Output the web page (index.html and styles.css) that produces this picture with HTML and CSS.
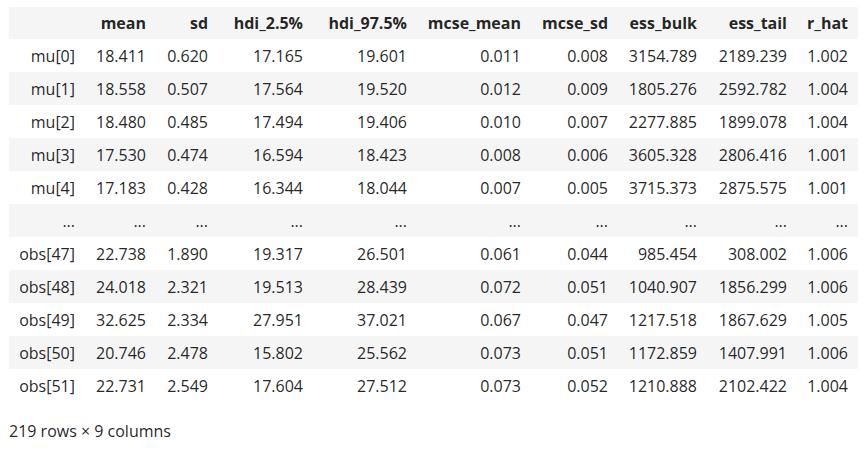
FILE: index.html
```html
<!DOCTYPE html>
<html>
<head>
<meta charset="utf-8">
<link rel="stylesheet" href="styles.css">
</head>
<body>
<div class="output">
<table class="df">
<colgroup>
<col class="c-idx"><col class="c-mean"><col class="c-sd"><col class="c-h1"><col class="c-h2"><col class="c-mm"><col class="c-ms"><col class="c-eb"><col class="c-et"><col class="c-rh">
</colgroup>
<thead>
<tr><th></th><th>mean</th><th>sd</th><th>hdi_2.5%</th><th>hdi_97.5%</th><th>mcse_mean</th><th>mcse_sd</th><th>ess_bulk</th><th>ess_tail</th><th>r_hat</th></tr>
</thead>
<tbody>
<tr><th>mu[0]</th><td>18.411</td><td>0.620</td><td>17.165</td><td>19.601</td><td>0.011</td><td>0.008</td><td>3154.789</td><td>2189.239</td><td>1.002</td></tr>
<tr><th>mu[1]</th><td>18.558</td><td>0.507</td><td>17.564</td><td>19.520</td><td>0.012</td><td>0.009</td><td>1805.276</td><td>2592.782</td><td>1.004</td></tr>
<tr><th>mu[2]</th><td>18.480</td><td>0.485</td><td>17.494</td><td>19.406</td><td>0.010</td><td>0.007</td><td>2277.885</td><td>1899.078</td><td>1.004</td></tr>
<tr><th>mu[3]</th><td>17.530</td><td>0.474</td><td>16.594</td><td>18.423</td><td>0.008</td><td>0.006</td><td>3605.328</td><td>2806.416</td><td>1.001</td></tr>
<tr><th>mu[4]</th><td>17.183</td><td>0.428</td><td>16.344</td><td>18.044</td><td>0.007</td><td>0.005</td><td>3715.373</td><td>2875.575</td><td>1.001</td></tr>
<tr><th>...</th><td>...</td><td>...</td><td>...</td><td>...</td><td>...</td><td>...</td><td>...</td><td>...</td><td>...</td></tr>
<tr><th>obs[47]</th><td>22.738</td><td>1.890</td><td>19.317</td><td>26.501</td><td>0.061</td><td>0.044</td><td>985.454</td><td>308.002</td><td>1.006</td></tr>
<tr><th>obs[48]</th><td>24.018</td><td>2.321</td><td>19.513</td><td>28.439</td><td>0.072</td><td>0.051</td><td>1040.907</td><td>1856.299</td><td>1.006</td></tr>
<tr><th>obs[49]</th><td>32.625</td><td>2.334</td><td>27.951</td><td>37.021</td><td>0.067</td><td>0.047</td><td>1217.518</td><td>1867.629</td><td>1.005</td></tr>
<tr><th>obs[50]</th><td>20.746</td><td>2.478</td><td>15.802</td><td>25.562</td><td>0.073</td><td>0.051</td><td>1172.859</td><td>1407.991</td><td>1.006</td></tr>
<tr><th>obs[51]</th><td>22.731</td><td>2.549</td><td>17.604</td><td>27.512</td><td>0.073</td><td>0.052</td><td>1210.888</td><td>2102.422</td><td>1.004</td></tr>
</tbody>
</table>
<p class="shape">219 rows × 9 columns</p>
</div>
</body>
</html>
```
FILE: styles.css
```css
html, body {
  margin: 0;
  padding: 0;
  background: #ffffff;
}
body {
  font-family: "Open Sans", "Noto Sans", sans-serif;
  font-size: 16px;
  color: rgba(0, 0, 0, 0.87);
}
.output {
  padding: 7px 0 0 9px;
}
.df {
  border-collapse: collapse;
  border-spacing: 0;
  table-layout: fixed;
  width: 849px;
}
.c-idx { width: 76px; }
.c-mean { width: 71px; }
.c-sd { width: 62px; }
.c-h1 { width: 95px; }
.c-h2 { width: 104px; }
.c-mm { width: 114px; }
.c-ms { width: 87px; }
.c-eb { width: 89px; }
.c-et { width: 90px; }
.c-rh { width: 61px; }
.df th, .df td {
  text-align: right;
  padding: 0 10px 0 0;
  height: 33px;
  line-height: 18px;
  white-space: nowrap;
  vertical-align: middle;
  box-sizing: border-box;
}
.df thead th {
  font-weight: bold;
  height: 32px;
  background: #f5f5f5;
}
.df tbody th {
  font-weight: normal;
}
.df tbody tr:nth-child(even) {
  background: #f5f5f5;
}
.shape {
  margin: 18px 0 0 0;
  line-height: 22px;
}
```
